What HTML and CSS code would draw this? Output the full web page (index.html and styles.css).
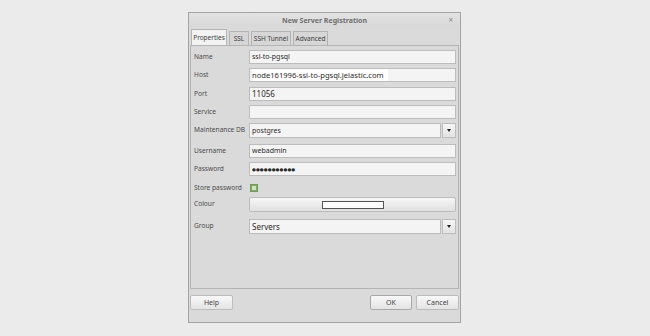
FILE: index.html
```html
<!DOCTYPE html>
<html>
<head>
    <title>New Server Registration</title>
    <link rel="stylesheet" href="styles.css">
</head>
<body>
    <div class="dialog">
        <div class="titlebar">
            <span class="title">New Server Registration</span>
            <span class="close">&#215;</span>
        </div>

        <div class="tabs">
            <div class="tab active">Properties</div>
            <div class="tab ssl">SSL</div>
            <div class="tab ssh">SSH Tunnel</div>
            <div class="tab adv">Advanced</div>
        </div>

        <div class="panel">
            <div class="form">
                <label>Name</label>
                <div class="field">ssl-to-pgsql</div>

                <label>Host</label>
                <div class="field host"><span class="sel">node161996-ssl-to-pgsql.jelastic.com</span></div>

                <label>Port</label>
                <div class="field big">11056</div>

                <label>Service</label>
                <div class="field"></div>

                <label>Maintenance DB</label>
                <div class="combo">
                    <div class="field">postgres</div>
                    <div class="drop"><span class="arrow"></span></div>
                </div>

                <label>Username</label>
                <div class="field">webadmin</div>

                <label>Password</label>
                <div class="field dots">&#9679;&#9679;&#9679;&#9679;&#9679;&#9679;&#9679;&#9679;&#9679;&#9679;&#9679;</div>

                <label>Store password</label>
                <div class="check-cell"><span class="check"></span></div>

                <label>Colour</label>
                <div class="colour-btn"><span class="swatch"></span></div>

                <label>Group</label>
                <div class="combo">
                    <div class="field big">Servers</div>
                    <div class="drop"><span class="arrow"></span></div>
                </div>
            </div>
        </div>

        <div class="buttons">
            <button>Help</button>
            <div class="right">
                <button class="default">OK</button>
                <button>Cancel</button>
            </div>
        </div>
    </div>
</body>
</html>
```

FILE: styles.css
```css
body {
    margin: 0;
    background: #ebebeb;
    font-family: "Noto Sans", "DejaVu Sans", sans-serif;
    font-size: 7px;
    color: #3c3c3c;
}
.dialog {
    margin: 12px 0 0 188px;
    width: 273px;
    height: 311px;
    box-sizing: border-box;
    background: #dadada;
    border: 1px solid #a4a4a4;
    display: flex;
    flex-direction: column;
}
.titlebar {
    height: 14px;
    display: flex;
    align-items: center;
    justify-content: center;
    position: relative;
    background: linear-gradient(#e2e2e2, #d8d8d8);
}
.title {
    font-weight: bold;
    color: #6e6e6e;
}
.close {
    position: absolute;
    right: 7px;
    top: 1px;
    color: #8a8a8a;
    font-size: 8px;
}
.tabs {
    display: flex;
    gap: 2px;
    margin: 1px 0 0 2px;
    height: 17px;
    align-items: flex-end;
}
.tab {
    width: 20px;
    height: 14px;
    box-sizing: border-box;
    display: flex;
    align-items: center;
    justify-content: center;
    border: 1px solid #b4b4b4;
    border-bottom: none;
    background: #d6d6d6;
    color: #3c3c3c;
    font-size: 6.5px;
    white-space: nowrap;
}
.tab.active {
    width: 36px;
    height: 16px;
    background: #f3f3f3;
}
.tab.ssh {
    width: 40px;
}
.tab.adv {
    width: 35px;
}
.panel {
    margin: 0 1px;
    height: 244px;
    box-sizing: border-box;
    border: 1px solid #b4b4b4;
    padding: 4px 2px 0 3px;
}
.form {
    display: grid;
    grid-template-columns: 55px 1fr;
    grid-template-rows: 18px 19px 18px 18px 21px 18px 19px 16px 22px 14px;
    align-items: start;
}
.form label {
    height: 14px;
    line-height: 14px;
    color: #4a4a4a;
    font-size: 6.6px;
    white-space: nowrap;
}
.field {
    height: 14px;
    box-sizing: border-box;
    border: 1px solid #bcbcbc;
    background: #f4f4f4;
    padding: 0 2px;
    line-height: 12px;
    color: #2a2a2a;
    white-space: nowrap;
    overflow: hidden;
}
.field.big {
    font-size: 8px;
}
.host .sel {
    display: inline-block;
    background: #ffffff;
    font-size: 7.6px;
    padding-right: 4px;
}
.dots {
    font-size: 4.4px;
    letter-spacing: 0.1px;
    line-height: 12px;
}
.combo {
    display: flex;
    gap: 1px;
}
.combo .field {
    flex: 1;
    height: 15px;
    line-height: 13px;
}
.drop {
    width: 14px;
    height: 15px;
    box-sizing: border-box;
    border: 1px solid #bcbcbc;
    background: linear-gradient(#f6f6f6, #e2e2e2);
    display: flex;
    align-items: center;
    justify-content: center;
}
.arrow {
    width: 0;
    height: 0;
    border-left: 2.5px solid transparent;
    border-right: 2.5px solid transparent;
    border-top: 3px solid #222;
}
.check-cell {
    height: 14px;
    display: flex;
    align-items: center;
    padding-left: 1px;
}
.check {
    width: 8px;
    height: 8px;
    box-sizing: border-box;
    background: #7fae62;
    border: 1px solid #6f9a58;
    display: flex;
    align-items: center;
    justify-content: center;
}
.check::after {
    content: "";
    width: 4px;
    height: 4px;
    background: #cfe3c2;
}
.colour-btn {
    height: 15px;
    box-sizing: border-box;
    border: 1px solid #bcbcbc;
    border-radius: 2px;
    background: linear-gradient(#f6f6f6, #e0e0e0);
    display: flex;
    align-items: center;
    justify-content: center;
}
.swatch {
    width: 62px;
    height: 8px;
    box-sizing: border-box;
    background: #ffffff;
    border: 1px solid #555;
}
.buttons {
    display: flex;
    justify-content: space-between;
    margin: 6px 1px 0 1px;
}
.buttons .right {
    display: flex;
    gap: 4px;
}
button {
    font-family: inherit;
    font-size: 7px;
    color: #444;
    width: 43px;
    height: 15px;
    padding: 0;
    border: 1px solid #bcbcbc;
    border-radius: 2px;
    background: linear-gradient(#f8f8f8, #e4e4e4);
}
button.default {
    width: 42px;
    border-color: #a8a8a8;
}
```
